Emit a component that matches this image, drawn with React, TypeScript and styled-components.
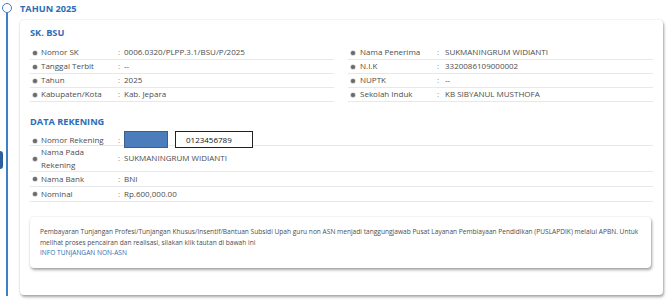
import React from 'react';
import styled, { createGlobalStyle } from 'styled-components';

const GlobalStyle = createGlobalStyle`
  html, body {
    margin: 0;
    padding: 0;
    background: #ffffff;
    font-family: 'Open Sans', 'Noto Sans', sans-serif;
    color: #4d4d4d;
  }
`;

type Item = { label: string; value: string; h?: number };

const skLeft: Item[] = [
  { label: 'Nomor SK', value: '0006.0320/PLPP.3.1/BSU/P/2025' },
  { label: 'Tanggal Terbit', value: '--' },
  { label: 'Tahun', value: '2025' },
  { label: 'Kabupaten/Kota', value: 'Kab. Jepara' },
];

const skRight: Item[] = [
  { label: 'Nama Penerima', value: 'SUKMANINGRUM WIDIANTI' },
  { label: 'N.I.K', value: '3320086109000002' },
  { label: 'NUPTK', value: '--' },
  { label: 'Sekolah Induk', value: 'KB SIBYANUL MUSTHOFA' },
];

const rekening: Item[] = [
  { label: 'Nama Pada Rekening', value: 'SUKMANINGRUM WIDIANTI', h: 25 },
  { label: 'Nama Bank', value: 'BNI', h: 14 },
  { label: 'Nominal', value: 'Rp.600,000.00', h: 14 },
];

const App = () => {
  return (
    <>
      <GlobalStyle />
      <Page>
        <EdgeTab />
        <Rail>
          <Dot />
          <RailLine />
        </Rail>
        <Content>
          <YearTitle>TAHUN 2025</YearTitle>
          <Card>
            <SectionTitle>SK. BSU</SectionTitle>
            <TwoCols>
              <List>
                {skLeft.map((it) => (
                  <Row key={it.label}>
                    <Bullet />
                    <Label>{it.label}</Label>
                    <Colon>:</Colon>
                    <Value>{it.value}</Value>
                  </Row>
                ))}
              </List>
              <List>
                {skRight.map((it) => (
                  <Row key={it.label} $wide>
                    <Bullet />
                    <Label>{it.label}</Label>
                    <Colon>:</Colon>
                    <Value>{it.value}</Value>
                  </Row>
                ))}
              </List>
            </TwoCols>

            <SectionTitle $spaced>DATA REKENING</SectionTitle>
            <List>
              <Row>
                <Bullet />
                <Label>Nomor Rekening</Label>
                <Colon>:</Colon>
                <Value>
                  <Masked />
                  <AccountBox>0123456789</AccountBox>
                </Value>
              </Row>
              {rekening.map((it) => (
                <Row key={it.label} $h={it.h}>
                  <Bullet />
                  <Label>{it.label}</Label>
                  <Colon>:</Colon>
                  <Value>{it.value}</Value>
                </Row>
              ))}
            </List>

            <InfoBox>
              <InfoText>
                Pembayaran Tunjangan Profesi/Tunjangan Khusus/Insentif/Bantuan Subsidi Upah guru non ASN menjadi
                tanggungjawab Pusat Layanan Pembiayaan Pendidikan (PUSLAPDIK) melalui APBN. Untuk melihat proses
                pencairan dan realisasi, silakan klik tautan di bawah ini
              </InfoText>
              <InfoLink href="#">INFO TUNJANGAN NON-ASN</InfoLink>
            </InfoBox>
          </Card>
        </Content>
      </Page>
    </>
  );
};

const Page = styled.div`
  position: relative;
  display: flex;
  width: 672px;
  height: 306px;
  padding-top: 3px;
  box-sizing: border-box;
  overflow: hidden;
`;

const EdgeTab = styled.div`
  position: absolute;
  left: -3px;
  top: 151px;
  width: 6px;
  height: 18px;
  border-radius: 3px;
  background: #2c5f9e;
`;

const Rail = styled.div`
  width: 20px;
  display: flex;
  flex-direction: column;
  align-items: center;
  padding-right: 6px;
  box-sizing: border-box;
  height: 293px;
`;

const Dot = styled.div`
  width: 10px;
  height: 10px;
  border: 1.5px solid #3f7fc4;
  border-radius: 50%;
  box-sizing: border-box;
  background: #fff;
`;

const RailLine = styled.div`
  flex: 1;
  width: 1.5px;
  background: #3f7fc4;
`;

const Content = styled.div`
  width: 643px;
  display: flex;
  flex-direction: column;
`;

const YearTitle = styled.div`
  font-size: 9.2px;
  font-weight: 700;
  color: #2e6db4;
  line-height: 11px;
  margin-bottom: 6px;
`;

const Card = styled.div`
  background: #fff;
  border-radius: 4px;
  box-shadow: 0 0 2px rgba(0, 0, 0, 0.12), 1px 2px 3px rgba(0, 0, 0, 0.35);
  padding: 6px 10px 0 10px;
  height: 275px;
  box-sizing: border-box;
`;

const SectionTitle = styled.div<{ $spaced?: boolean }>`
  font-size: 9.2px;
  font-weight: 700;
  color: #2e6db4;
  line-height: 14px;
  margin-top: ${(p) => (p.$spaced ? '13px' : '0')};
  margin-bottom: ${(p) => (p.$spaced ? '3px' : '6px')};
`;

const TwoCols = styled.div`
  display: grid;
  grid-template-columns: 304px 305px;
  gap: 14px;
`;

const List = styled.div`
  display: flex;
  flex-direction: column;
`;

const Row = styled.div<{ $wide?: boolean; $h?: number }>`
  display: grid;
  grid-template-columns: ${(p) => (p.$wide ? '12px 77px 8px 1fr' : '11px 77px 6px 1fr')};
  align-items: center;
  height: ${(p) => p.$h ?? 13}px;
  border-bottom: 1px solid #e6e8ee;
  font-size: 8px;
  line-height: 12.5px;
  color: #4d4d4d;
`;

const Bullet = styled.span`
  width: 4px;
  height: 4px;
  margin-left: 3px;
  border-radius: 50%;
  background: #6a6a6a;
  box-shadow: 0 0 0 0.6px #b5b5b5;
`;

const Label = styled.span`
  padding-right: 5px;
`;

const Colon = styled.span`
  color: #8a8a8a;
`;

const Value = styled.span`
  display: flex;
  align-items: center;
  white-space: nowrap;
`;

const Masked = styled.span`
  position: relative;
  top: -1px;
  width: 44px;
  height: 17px;
  background: #4b7dbd;
  border: 1px solid #3a5f8f;
  box-sizing: border-box;
`;

const AccountBox = styled.span`
  position: relative;
  top: -1px;
  margin-left: 7px;
  width: 78px;
  height: 17px;
  border: 1px solid #222;
  box-sizing: border-box;
  background: #fff;
  color: #111;
  font-size: 8px;
  padding-left: 10px;
  line-height: 15px;
`;

const InfoBox = styled.div`
  margin-top: 15px;
  margin-right: 2px;
  background: #fff;
  border-radius: 4px;
  box-shadow: 0 0 2px rgba(0, 0, 0, 0.12), 1px 2px 3px rgba(0, 0, 0, 0.35);
  padding: 10px 12px 9px 10px;
  height: 51px;
  box-sizing: border-box;
`;

const InfoText = styled.p`
  margin: 0;
  font-size: 6.6px;
  line-height: 10.5px;
  color: #4d4d4d;
`;

const InfoLink = styled.a`
  display: block;
  font-size: 6.6px;
  line-height: 10.5px;
  color: #2e6db4;
  text-decoration: none;
`;

export default App;
